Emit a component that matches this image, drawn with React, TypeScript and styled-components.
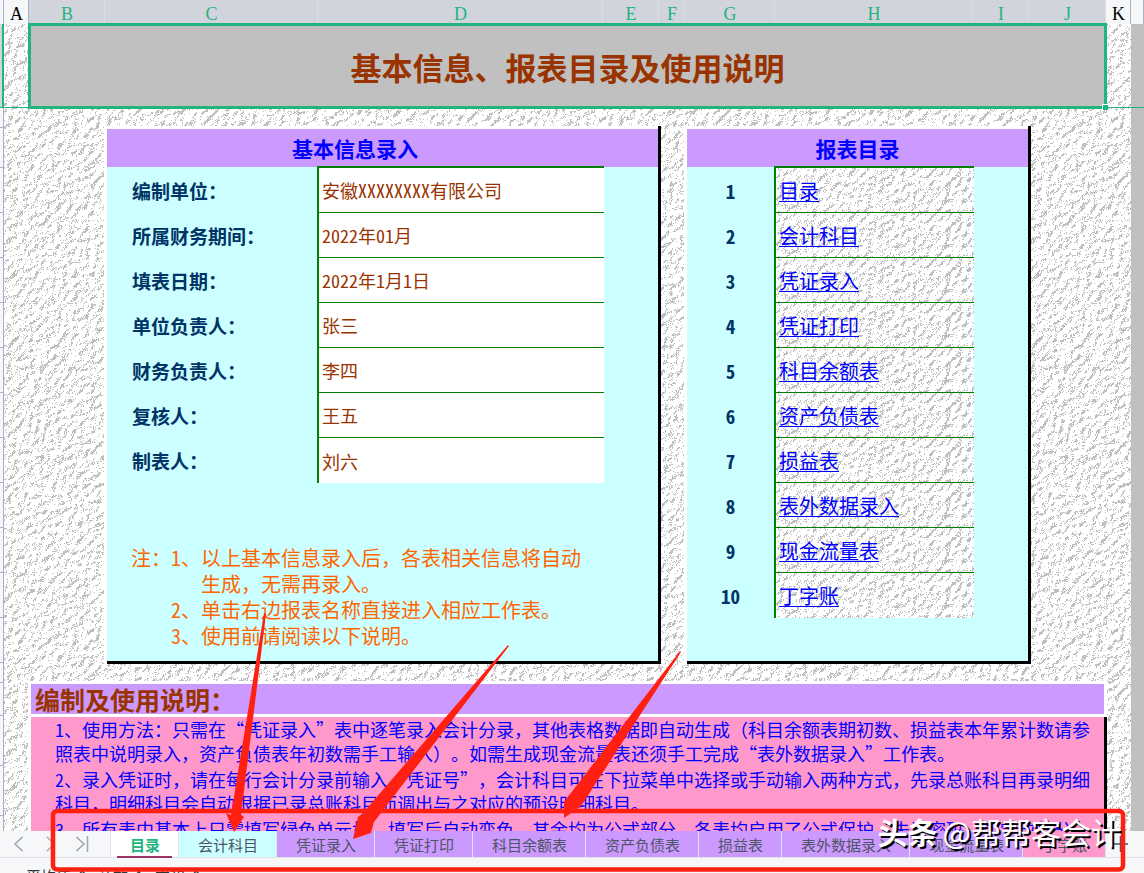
import React from "react";
import styled, { createGlobalStyle, css } from "styled-components";

const levels = ".75 .75 .75 .75 .75 .75 .75 .75 .75 .75 .75 1 1 1 1 1 1 1 1 1";

const stone = encodeURIComponent(
  `<svg xmlns="http://www.w3.org/2000/svg" width="512" height="512"><filter id="s" x="0" y="0" width="100%" height="100%" color-interpolation-filters="sRGB"><feTurbulence type="fractalNoise" baseFrequency="0.18" numOctaves="4" seed="7" stitchTiles="stitch"/><feConvolveMatrix order="3" divisor="3" edgeMode="wrap" kernelMatrix="0 0 1 0 1 0 1 0 0"/><feDiffuseLighting surfaceScale="2" diffuseConstant="1" lighting-color="#fff" result="l"><feDistantLight azimuth="225" elevation="45"/></feDiffuseLighting><feTurbulence type="fractalNoise" baseFrequency="0.83" numOctaves="2" seed="3"/><feColorMatrix values="0 0 0 1 0 0 0 0 1 0 0 0 0 1 0 0 0 0 0 1" result="d"/><feComposite in="l" in2="d" operator="arithmetic" k2="1" k3="1" k4="-0.5"/><feComponentTransfer><feFuncR type="discrete" tableValues="${levels}"/><feFuncG type="discrete" tableValues="${levels}"/><feFuncB type="discrete" tableValues="${levels}"/></feComponentTransfer></filter><rect width="512" height="512" filter="url(#s)"/></svg>`
);

const c = {
  green: "#21b57d",
  line: "#008000",
  purple: "#cc99ff",
  cyan: "#ccffff",
  pink: "#ff99cc",
  brown: "#993300",
  blue: "#0000ff",
  navy: "#003366",
  chrome: "#f5f7f9",
  edge: "#a9afc6",
};

const texture = css`
  background: #fff url("data:image/svg+xml,${stone}");
`;

const GlobalStyle = createGlobalStyle`
  *, *::before, *::after { box-sizing: border-box; }
  body {
    margin: 0;
    background: ${c.chrome};
    font-family: "Noto Sans Mono CJK SC", "Noto Sans CJK SC", sans-serif;
    text-spacing-trim: space-all;
  }
`;

const Page = styled.div`
  position: relative;
  display: flex;
  flex-direction: column;
  height: 100vh;
  overflow: hidden;
`;

const ColumnHeads = styled.div`
  flex: none;
  display: grid;
  grid-template-columns: 4px 25fr 76fr 213fr 285fr 56fr 26fr 90fr 198fr 56fr 77fr 25fr 13px;
  height: 24px;
`;

const ColumnHead = styled.div<{ $on?: boolean }>`
  display: flex;
  align-items: center;
  justify-content: center;
  padding: 4px 0 0 1px;
  border-right: 1px solid ${(p) => (p.$on ? "#d9dce5" : c.edge)};
  border-bottom: 1px solid ${c.edge};
  background: ${(p) => (p.$on ? "#d1d4dc" : c.chrome)};
  color: ${(p) => (p.$on ? c.green : "#000")};
  font: 18px/20px "Liberation Serif", serif;
`;

const Workspace = styled.div`
  flex: 1;
  min-height: 0;
  display: flex;
`;

const Gutter = styled.div`
  flex: none;
  width: 4px;
  overflow: hidden;
`;

const RowHead = styled.div<{ $height: number; $on?: boolean }>`
  height: ${(p) => p.$height}px;
  border-right: ${(p) => (p.$on ? `2px solid ${c.green}` : `1px solid ${c.edge}`)};
  border-bottom: 1px solid ${(p) => (p.$on ? c.green : c.edge)};
  background: ${(p) => (p.$on ? "#d1d4dc" : c.chrome)};
`;

const Outside = styled.div`
  flex: none;
  width: 13px;
  background: #c0c0c0;
`;

const SelectionEdge = styled.div`
  height: 84px;
  border-bottom: 1px solid ${c.green};
`;

const Sheet = styled.main`
  flex: 1;
  min-width: 0;
  overflow: clip;
  overflow-clip-margin: 1px;
  ${texture}
`;

const TitleRow = styled.div`
  display: grid;
  grid-template-columns: 24px 1fr 24px;
  height: 84px;
`;

const Title = styled.h1`
  position: relative;
  display: flex;
  align-items: center;
  justify-content: center;
  height: 86px;
  margin: -1px 0 0;
  padding-top: 2px;
  border: 3px solid ${c.green};
  background: #c0c0c0;
  color: ${c.brown};
  font-size: 31px;
  line-height: 40px;
  font-weight: 700;
`;

const FillHandle = styled.span`
  position: absolute;
  right: -4px;
  bottom: -4px;
  width: 6px;
  height: 6px;
  border: 1px solid #fff;
  border-width: 1px 0 0 1px;
  background: ${c.green};
`;

const Panels = styled.div`
  display: grid;
  grid-template-columns: 100fr 557fr 23fr 347fr 100fr;
  padding: 18px 0 17px;
`;

const Panel = styled.section<{ $column: number }>`
  grid-column: ${(p) => p.$column};
  display: flex;
  flex-direction: column;
  border-left: 3px solid #fff;
  border-right: 3px solid #000;
  background: ${c.cyan};
  &::after {
    content: "";
    height: 3px;
    margin-top: auto;
    background: #000;
  }
`;

const PanelTitle = styled.h2<{ $inset?: boolean }>`
  height: 41px;
  margin: 0;
  padding-right: ${(p) => (p.$inset ? "10%" : "0")};
  border-top: 3px solid #fff;
  background: ${c.purple};
  color: ${c.blue};
  font-size: 21px;
  line-height: 38px;
  font-weight: 700;
  text-align: center;
`;

const Rows = styled.div`
  margin-top: -1px;
`;

const Row = styled.div<{ $columns: string }>`
  display: grid;
  grid-template-columns: ${(p) => p.$columns};
  grid-template-rows: 100%;
  height: 45px;
  &:first-child {
    height: 47px;
  }
  &:first-child > :first-child {
    padding-top: 2px;
  }
  &:first-child > :nth-child(2) {
    border-top: 2px solid ${c.line};
  }
  &:last-child > :nth-child(2) {
    border-bottom: 0;
  }
`;

const FieldLabel = styled.label`
  padding-left: 25px;
  color: ${c.navy};
  font-size: 19px;
  line-height: 45px;
  font-weight: 700;
`;

const Field = styled.input`
  width: 100%;
  min-width: 0;
  height: 100%;
  padding: 0 3px;
  border: 0;
  border-left: 2px solid ${c.line};
  border-bottom: 1px solid ${c.line};
  border-radius: 0;
  outline: 0;
  background: #fff;
  color: ${c.brown};
  font-family: inherit;
  font-size: 18px;
`;

const Notes = styled.div`
  display: flex;
  margin: 62px 0 12px;
  padding-left: 24px;
  color: #ff6600;
  font-size: 20px;
  line-height: 26px;
`;

const NoteList = styled.ol`
  width: 422px;
  margin: 0;
  padding: 0;
  list-style: none;
`;

const Note = styled.li`
  display: grid;
  grid-template-columns: 30px 1fr;
`;

const Index = styled.span`
  color: ${c.navy};
  font-size: 19px;
  line-height: 45px;
  font-weight: 700;
  text-align: center;
`;

const LinkCell = styled.div`
  padding-left: 3px;
  border-left: 2px solid ${c.line};
  border-bottom: 1px solid ${c.line};
  line-height: 46px;
  ${texture}
`;

const SheetLink = styled.a`
  color: ${c.blue};
  font-size: 20px;
  text-decoration: underline;
  text-decoration-thickness: 1px;
  text-underline-offset: 2px;
  text-decoration-skip-ink: none;
`;

const Guide = styled.section`
  margin: 0 24px;
  border-left: 3px solid #fff;
`;

const GuideTitle = styled.h2`
  margin: 0;
  padding-left: 4px;
  border: 3px solid #fff;
  border-left: 0;
  background: ${c.purple};
  color: ${c.brown};
  font-size: 25px;
  line-height: 30px;
  font-weight: 700;
`;

const GuideBody = styled.div`
  border-right: 3px solid #000;
  background: ${c.pink};
`;

const GuideText = styled.p`
  height: 50px;
  margin: 0;
  padding: 0 10px 0 24px;
  color: ${c.blue};
  font-size: 18px;
  line-height: 24px;
`;

const TabBar = styled.nav`
  position: relative;
  flex: none;
  display: flex;
  height: 27px;
  border-bottom: 1px solid #e1e3e8;
  background: ${c.chrome};
`;

const NavButtons = styled.div`
  display: flex;
  align-items: center;
  width: 111px;
  padding-left: 11px;
  gap: 14px;
  border-right: 1px solid #e1e3e8;
`;

const IconButton = styled.button`
  display: flex;
  align-items: center;
  justify-content: center;
  width: 17px;
  height: 26px;
  padding: 0;
  border: 0;
  background: none;
`;

const Tab = styled.button<{ $color: string; $active?: boolean }>`
  position: relative;
  flex: none;
  height: 26px;
  padding: 2px 18px 0 19px;
  border: 0;
  border-right: 1px solid #e1e3e8;
  background: ${(p) => p.$color};
  color: ${(p) => (p.$active ? c.green : "#4d5566")};
  font-family: inherit;
  font-size: 15px;
  line-height: 24px;
  font-weight: ${(p) => (p.$active ? 700 : 400)};
  &::after {
    content: "";
    display: ${(p) => (p.$active ? "block" : "none")};
    position: absolute;
    left: 6px;
    right: 6px;
    bottom: -1px;
    height: 2px;
    background: #993366;
  }
`;

const AddButton = styled(IconButton)`
  margin-left: 6px;
`;

const StatusBar = styled.footer`
  flex: none;
  display: flex;
  gap: 12px;
  height: 15px;
  padding: 8px 0 0 26px;
  overflow: hidden;
  background: ${c.chrome};
  color: #333;
  font-size: 15px;
  line-height: 20px;
`;

const Marks = styled.svg`
  position: absolute;
  left: 0;
  top: 0;
  pointer-events: none;
`;

const Watermark = styled.div`
  position: absolute;
  right: 23px;
  bottom: 22px;
  display: flex;
  align-items: center;
  gap: 5px;
  color: #fff;
  font-family: "Noto Sans CJK SC", sans-serif;
  font-size: 30px;
  line-height: 40px;
  text-shadow: 2px 2px 0 #000;
  pointer-events: none;
  white-space: nowrap;
`;

const columns = "ABCDEFGHIJK".split("");

const rowHeights = [20, 40, 45, 45, 45, 45, 45, 45, 45, 45, 45, 45, 45, 20, 33, 50, 50, 50];

const fields = [
  ["编制单位：", "安徽XXXXXXXX有限公司"],
  ["所属财务期间：", "2022年01月"],
  ["填表日期：", "2022年1月1日"],
  ["单位负责人：", "张三"],
  ["财务负责人：", "李四"],
  ["复核人：", "王五"],
  ["制表人：", "刘六"],
];

const notes = [
  "以上基本信息录入后，各表相关信息将自动生成，无需再录入。",
  "单击右边报表名称直接进入相应工作表。",
  "使用前请阅读以下说明。",
];

const sheets = [
  "目录",
  "会计科目",
  "凭证录入",
  "凭证打印",
  "科目余额表",
  "资产负债表",
  "损益表",
  "表外数据录入",
  "现金流量表",
  "丁字账",
];

const guide = [
  "1、使用方法：只需在“凭证录入”表中逐笔录入会计分录，其他表格数据即自动生成（科目余额表期初数、损益表本年累计数请参照表中说明录入，资产负债表年初数需手工输入）。如需生成现金流量表还须手工完成“表外数据录入”工作表。",
  "2、录入凭证时，请在每行会计分录前输入“凭证号”，会计科目可在下拉菜单中选择或手动输入两种方式，先录总账科目再录明细科目，明细科目会自动根据已录总账科目而调出与之对应的预设明细科目。",
  "3、所有表中基本上只需填写绿色单元格，填写后自动变色，其余均为公式部分，各表均启用了公式保护，未设密码，如需改部分。",
];

const tabColor = (i: number) =>
  i === 0 ? "#fff" : i === 1 ? c.cyan : i === sheets.length - 1 ? c.pink : c.purple;

export default function App() {
  return (
    <Page>
      <GlobalStyle />
      <ColumnHeads>
        <ColumnHead />
        {columns.map((name, i) => (
          <ColumnHead key={name} $on={i > 0 && i < 10}>
            {name}
          </ColumnHead>
        ))}
        <ColumnHead />
      </ColumnHeads>

      <Workspace>
        <Gutter>
          <RowHead $height={84} $on />
          {rowHeights.map((h, i) => (
            <RowHead key={i} $height={h} />
          ))}
        </Gutter>
        <Sheet>
          <TitleRow>
            <SelectionEdge />
            <Title>
              基本信息、报表目录及使用说明
              <FillHandle />
            </Title>
            <SelectionEdge />
          </TitleRow>

          <Panels>
            <Panel $column={2}>
              <PanelTitle $inset>基本信息录入</PanelTitle>
              <Rows>
                {fields.map(([label, value], i) => (
                  <Row key={label} $columns="210fr 287fr 54fr">
                    <FieldLabel htmlFor={`field-${i}`}>{label}</FieldLabel>
                    <Field id={`field-${i}`} defaultValue={value} />
                  </Row>
                ))}
              </Rows>
              <Notes>
                注：
                <NoteList>
                  {notes.map((text, i) => (
                    <Note key={i}>
                      <span>{i + 1}、</span>
                      <span>{text}</span>
                    </Note>
                  ))}
                </NoteList>
              </Notes>
            </Panel>

            <Panel $column={4}>
              <PanelTitle>报表目录</PanelTitle>
              <Rows>
                {sheets.map((name, i) => (
                  <Row key={name} $columns="87fr 200fr 54fr">
                    <Index>{i + 1}</Index>
                    <LinkCell>
                      <SheetLink href={`#sheet-${i + 1}`}>{name}</SheetLink>
                    </LinkCell>
                  </Row>
                ))}
              </Rows>
            </Panel>
          </Panels>

          <Guide>
            <GuideTitle>编制及使用说明：</GuideTitle>
            <GuideBody>
              {guide.map((text, i) => (
                <GuideText key={i}>{text}</GuideText>
              ))}
            </GuideBody>
          </Guide>
        </Sheet>
        <Outside>
          <SelectionEdge />
        </Outside>
      </Workspace>

      <TabBar>
        <NavButtons>
          <IconButton aria-label="上一个">
            <svg width="17" height="18" viewBox="0 0 17 18" fill="none" stroke="#a0a3a9" strokeWidth="1.5">
              <path d="M11.5 2L4 9l7.5 7" />
            </svg>
          </IconButton>
          <IconButton aria-label="下一个">
            <svg width="17" height="18" viewBox="0 0 17 18" fill="none" stroke="#a0a3a9" strokeWidth="1.5">
              <path d="M5 2l7.5 7L5 16" />
            </svg>
          </IconButton>
          <IconButton aria-label="最后一个">
            <svg width="17" height="18" viewBox="0 0 17 18" fill="none" stroke="#a0a3a9" strokeWidth="1.5">
              <path d="M3.5 2L11 9l-7.5 7M14.5 1v16" />
            </svg>
          </IconButton>
        </NavButtons>
        {sheets.map((name, i) => (
          <Tab key={name} $color={tabColor(i)} $active={i === 0}>
            {name}
          </Tab>
        ))}
        <AddButton aria-label="新建工作表">
          <svg width="17" height="18" viewBox="0 0 17 18" fill="none" stroke="#4d5566" strokeWidth="1.5">
            <path d="M1 9h15M8.5 1v16" />
          </svg>
        </AddButton>
      </TabBar>

      <StatusBar>
        <span>平均值=0</span>
        <span>计数=1</span>
        <span>求和=0</span>
      </StatusBar>

      <Marks width="1144" height="873" viewBox="0 0 1144 873" fill="#ff2012" aria-hidden="true">
        <rect x="53" y="811" width="1070" height="58.5" rx="4" fill="none" stroke="#ff2012" strokeWidth="4.5" />
        <path d="M264 613L266 614L241 815L244 817L234 832L226 813L231 815Z" />
        <path d="M508 645L509 646L374 822L371 833L353 839L358 817L362 814Z" />
        <path d="M680 651L681 652L583 803L580 807L564 818L564 802L567 798Z" />
      </Marks>

      <Watermark>
        <b>头条</b>
        <span>@帮帮客会计</span>
      </Watermark>
    </Page>
  );
}
